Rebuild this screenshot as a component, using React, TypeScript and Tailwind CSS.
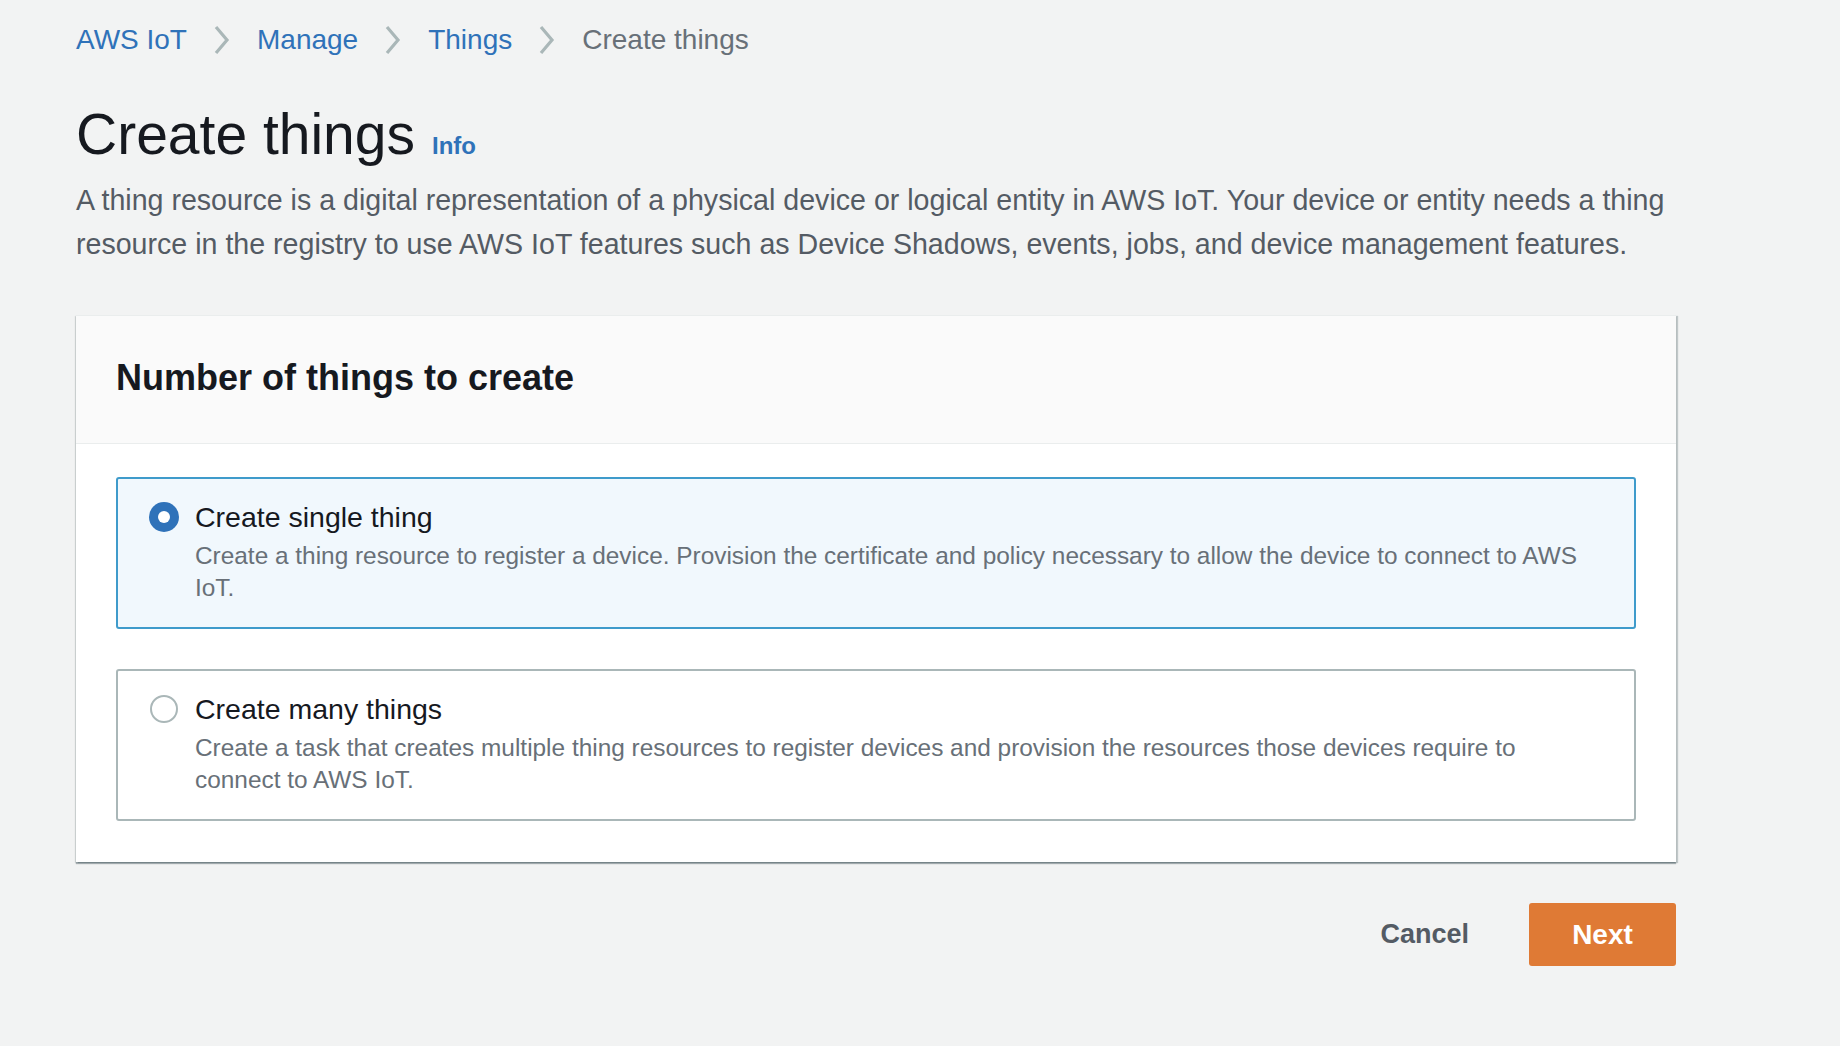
import { useState } from "react";

const crumbs = ["AWS IoT", "Manage", "Things"];

const options = [
  {
    id: "single",
    title: "Create single thing",
    lines: [
      "Create a thing resource to register a device. Provision the certificate and policy necessary to allow the device to connect to AWS",
      "IoT.",
    ],
  },
  {
    id: "many",
    title: "Create many things",
    lines: [
      "Create a task that creates multiple thing resources to register devices and provision the resources those devices require to",
      "connect to AWS IoT.",
    ],
  },
];

function Chevron() {
  return (
    <svg viewBox="0 0 18 30" className="h-[30px] w-[18px]" fill="none" stroke="#aab7b8" strokeWidth="3.2">
      <path d="M3 2l11 13L3 28" strokeLinejoin="miter" />
    </svg>
  );
}

function Radio({ checked }: { checked: boolean }) {
  return (
    <span className="mt-[2px] flex h-[30px] w-[30px] shrink-0 items-center justify-center">
      {checked ? (
        <span className="flex h-[30px] w-[30px] items-center justify-center rounded-full bg-[#2f72b9]">
          <span className="h-[12px] w-[12px] rounded-full bg-white" />
        </span>
      ) : (
        <span className="h-[28px] w-[28px] rounded-full border-2 border-[#aab7b8] bg-white" />
      )}
    </span>
  );
}

export default function App() {
  const [selected, setSelected] = useState("single");

  return (
    <div className="min-h-screen bg-[#f2f3f3] font-['Liberation_Sans',Arial,sans-serif]">
      <div className="ml-[76px] w-[1600px] pt-[20px]">
        <nav className="flex h-[40px] items-center gap-[26px] text-[28px] leading-[40px]">
          {crumbs.map((c) => (
            <div key={c} className="flex items-center gap-[26px]">
              <a className="text-[#2f72b9]">{c}</a>
              <Chevron />
            </div>
          ))}
          <span className="text-[#687078]">Create things</span>
        </nav>

        <div className="mt-[42px] flex items-baseline gap-[17px]">
          <h1 className="text-[57px] leading-[64px] text-[#16191f]">Create things</h1>
          <a className="text-[24px] font-bold text-[#2f72b9]">Info</a>
        </div>
        <p className="mt-[12px] whitespace-nowrap text-[28.6px] leading-[44px] text-[#545b64]">
          A thing resource is a digital representation of a physical device or logical entity in AWS IoT. Your device or entity needs a thing
          <br />
          resource in the registry to use AWS IoT features such as Device Shadows, events, jobs, and device management features.
        </p>

        <section className="mt-[49px] border-t border-[#eaeded] bg-white shadow-[0_2px_1px_0_rgba(0,28,36,0.3),2px_1px_1px_0_rgba(0,28,36,0.2),-1px_1px_1px_0_rgba(0,28,36,0.12)]">
          <div className="border-b border-[#eaeded] bg-[#fafafa] px-[40px] pb-[43px] pt-[40px]">
            <h2 className="text-[36px] font-bold leading-[44px] text-[#16191f]">Number of things to create</h2>
          </div>
          <div className="flex flex-col gap-[40px] px-[40px] pb-[41px] pt-[33px]">
            {options.map((o) => {
              const on = selected === o.id;
              return (
                <label
                  key={o.id}
                  onClick={() => setSelected(o.id)}
                  className={
                    on
                      ? "flex h-[152px] cursor-pointer gap-[16px] rounded-[3px] border-2 border-[#3f9bcb] bg-[#f1f8fd] pb-[21px] pl-[31px] pr-[20px] pt-[21px]"
                      : "flex h-[152px] cursor-pointer gap-[16px] rounded-[3px] border-2 border-[#aab7b8] bg-white pb-[21px] pl-[31px] pr-[20px] pt-[21px]"
                  }
                >
                  <Radio checked={on} />
                  <div>
                    <div className="text-[28.5px] leading-[34px] text-[#16191f]">{o.title}</div>
                    <div className="mt-[6px] whitespace-nowrap text-[24.4px] leading-[32px] text-[#687078]">
                      {o.lines[0]}
                      <br />
                      {o.lines[1]}
                    </div>
                  </div>
                </label>
              );
            })}
          </div>
        </section>

        <div className="mt-[41px] flex items-center justify-end gap-[20px]">
          <button className="h-[63px] px-[40px] text-[27px] font-bold text-[#545b64]">Cancel</button>
          <button className="h-[63px] w-[147px] rounded-[3px] bg-[#df7a35] text-[28px] font-bold text-white">Next</button>
        </div>
      </div>
    </div>
  );
}
